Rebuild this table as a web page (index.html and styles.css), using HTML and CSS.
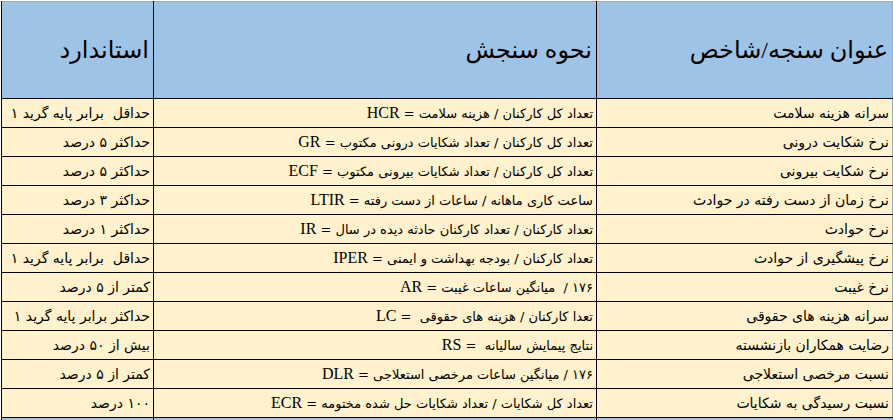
FILE: index.html
```html
<!DOCTYPE html>
<html lang="fa" dir="rtl">
<head>
<meta charset="utf-8">
<link rel="stylesheet" href="styles.css">
</head>
<body>
<table class="grid">
  <colgroup>
    <col class="c-title">
    <col class="c-method">
    <col class="c-std">
  </colgroup>
  <thead>
    <tr class="head">
      <th>عنوان سنجه/شاخص</th>
      <th>نحوه سنجش</th>
      <th>استاندارد</th>
    </tr>
  </thead>
  <tbody>
    <tr><td>سرانه هزینه سلامت</td><td class="method">تعداد کل کارکنان / هزینه سلامت = <span class="code">HCR</span></td><td>حداقل&nbsp; برابر پایه گرید ۱</td></tr>
    <tr><td>نرخ شکایت درونی</td><td class="method">تعداد کل کارکنان / تعداد شکایات درونی مکتوب = <span class="code">GR</span></td><td>حداکثر ۵ درصد</td></tr>
    <tr><td>نرخ شکایت بیرونی</td><td class="method">تعداد کل کارکنان / تعداد شکایات بیرونی مکتوب = <span class="code">ECF</span></td><td>حداکثر ۵ درصد</td></tr>
    <tr><td>نرخ زمان از دست رفته در حوادث</td><td class="method">ساعت کاری ماهانه / ساعات از دست رفته = <span class="code">LTIR</span></td><td>حداکثر ۳ درصد</td></tr>
    <tr><td>نرخ حوادث</td><td class="method">تعداد کارکنان / تعداد کارکنان حادثه دیده در سال = <span class="code">IR</span></td><td>حداکثر ۱ درصد</td></tr>
    <tr><td>نرخ پیشگیری از حوادث</td><td class="method">تعداد کارکنان / بودجه بهداشت و ایمنی = <span class="code">IPER</span></td><td>حداقل&nbsp; برابر پایه گرید ۱</td></tr>
    <tr><td>نرخ غیبت</td><td class="method">۱۷۶ /&nbsp; میانگین ساعات غیبت = <span class="code">AR</span></td><td>کمتر از ۵ درصد</td></tr>
    <tr><td>سرانه هزینه های حقوقی</td><td class="method">تعدا کارکنان / هزینه های حقوقی&nbsp; = <span class="code">LC</span></td><td>حداکثر برابر پایه گرید ۱</td></tr>
    <tr><td>رضایت همکاران بازنشسته</td><td class="method">نتایج پیمایش سالیانه&nbsp; = <span class="code">RS</span></td><td>بیش از ۵۰ درصد</td></tr>
    <tr><td>نسبت مرخصی استعلاجی</td><td class="method">۱۷۶ / میانگین ساعات مرخصی استعلاجی = <span class="code">DLR</span></td><td>کمتر از ۵ درصد</td></tr>
    <tr><td>نسبت رسیدگی به شکایات</td><td class="method">تعداد کل شکایات / تعداد شکایات حل شده مختومه = <span class="code">ECR</span></td><td>۱۰۰ درصد</td></tr>
    <tr class="tail"><td></td><td></td><td></td></tr>
  </tbody>
</table>
</body>
</html>
```
FILE: styles.css
```css
html, body {
  margin: 0;
  padding: 0;
  background: #ffffff;
}

body {
  font-family: "DejaVu Sans", sans-serif;
  overflow: hidden;
}

.grid {
  direction: rtl;
  border-collapse: collapse;
  table-layout: fixed;
  width: 891px;
  margin-top: 1px;
  border-top: 1px solid #a6a6a6;
}

.c-title { width: 296px; }
.c-method { width: 443px; }
.c-std { width: 152px; }

.head th {
  height: 96px;
  background: #9dc3e6;
  border: 1px solid #000;
  border-top: 1px solid #a6a6a6;
  text-align: right;
  padding: 0 4px 0 0;
  font-family: "Liberation Serif", "DejaVu Sans", serif;
  font-weight: normal;
  font-size: 24px;
  color: #000;
}

.head th:first-child {
  border-right: 1px solid #8eaccb;
}

tbody td {
  height: 28px;
  background: #fff2cc;
  border: 1px solid #000;
  text-align: right;
  padding: 0 3px 0 0;
  font-size: 14px;
  color: #000;
  white-space: nowrap;
  overflow: hidden;
}

tbody td.method {
  font-size: 13px;
}

tbody td:first-child {
  border-right: 1px solid #8eaccb;
}

.code {
  font-family: "Liberation Serif", serif;
  font-size: 16px;
}

.tail td {
  height: 10px;
  background: #9dc3e6;
}
```
